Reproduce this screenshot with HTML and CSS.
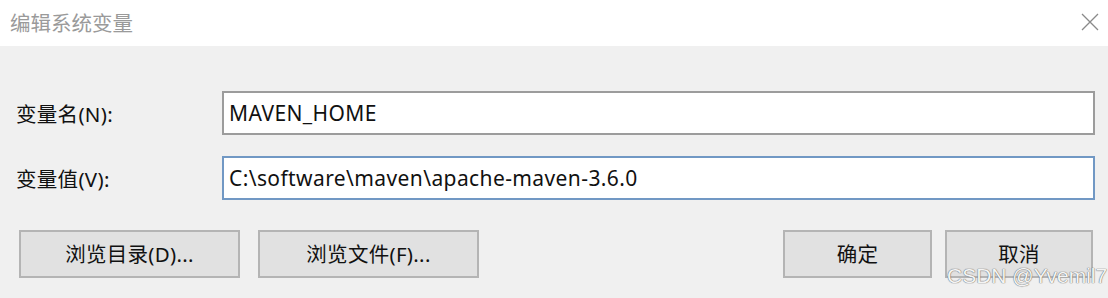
FILE: index.html
```html
<!DOCTYPE html>
<html lang="zh">
<head>
  <meta charset="UTF-8" />
  <title>编辑系统变量</title>
  <link rel="stylesheet" href="styles.css">
</head>
<body>

<div class="dialog">
  <div class="titlebar">
    <span class="title">编辑系统变量</span>
    <svg class="close" width="18" height="18" viewBox="0 0 18 18">
      <path d="M1 1 L17 17 M17 1 L1 17" stroke="#8a8a8a" stroke-width="1.3" fill="none" />
    </svg>
  </div>

  <div class="content">
    <div class="fields">
      <label class="label">变量名(N):</label>
      <div class="input">MAVEN_HOME</div>
      <label class="label">变量值(V):</label>
      <div class="input input-focus">C:\software\maven\apache-maven-3.6.0</div>
    </div>

    <div class="button-row">
      <div class="left-buttons">
        <button class="btn btn-wide">浏览目录(D)...</button>
        <button class="btn btn-wide">浏览文件(F)...</button>
      </div>
      <div class="right-buttons">
        <button class="btn btn-ok">确定</button>
        <button class="btn btn-cancel">取消</button>
      </div>
    </div>
  </div>

  <div class="watermark">CSDN @Yvemil7</div>
</div>

</body>
</html>
```

FILE: styles.css
```css
body {
  margin: 0;
  font-family: "Noto Sans", "Noto Sans CJK SC", sans-serif;
  background: #f0f0f0;
}

.dialog {
  position: relative;
  width: 1108px;
  height: 298px;
  overflow: hidden;
}

.titlebar {
  height: 46px;
  background: white;
  display: flex;
  align-items: center;
  justify-content: space-between;
  padding: 0 9px 2px 10px;
  box-sizing: border-box;
}

.title {
  font-family: "Noto Sans CJK SC", sans-serif;
  font-size: 20.5px;
  color: #9a9a9a;
}

.close {
  display: block;
}

.content {
  padding: 45px 0 0 16px;
}

.fields {
  display: grid;
  grid-template-columns: 206px 873px;
  row-gap: 21px;
  align-items: center;
}

.label {
  font-family: "Noto Sans", "Noto Sans CJK SC", sans-serif;
  font-size: 20.5px;
  letter-spacing: 0.3px;
  color: #111;
}

.input {
  height: 44px;
  box-sizing: border-box;
  border: 2px solid #9c9c9c;
  background: white;
  padding: 0 5px;
  display: flex;
  align-items: center;
  font-size: 21px;
  letter-spacing: 0.4px;
  color: #111;
}

.input-focus {
  border-color: #7198c4;
}

.button-row {
  display: flex;
  justify-content: space-between;
  margin-top: 30px;
  padding: 0 15px 0 3px;
}

.left-buttons, .right-buttons {
  display: flex;
}

.left-buttons {
  gap: 18px;
}

.right-buttons {
  gap: 13px;
}

.btn {
  height: 48px;
  box-sizing: border-box;
  background: #e1e1e1;
  border: 2px solid #b4b4b4;
  font-family: "Noto Sans", "Noto Sans CJK SC", sans-serif;
  font-size: 20.5px;
  letter-spacing: 0.3px;
  color: #111;
  padding: 0 0 2px;
}

.btn-wide {
  width: 221px;
}

.btn-ok {
  width: 149px;
}

.btn-cancel {
  width: 148px;
}

.watermark {
  position: absolute;
  left: 947px;
  top: 264px;
  font-family: "Liberation Sans", sans-serif;
  font-size: 21px;
  color: #f4f4f4;
  text-shadow: 0 0 1px #666, 0 0 1px #666;
}
```
